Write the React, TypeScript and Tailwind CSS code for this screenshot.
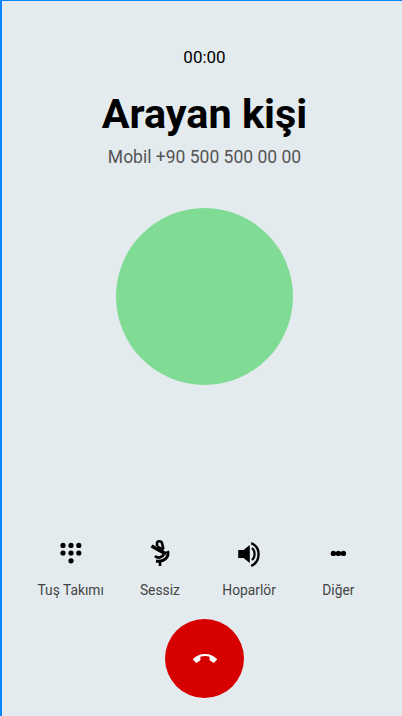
import { MdCallEnd } from 'react-icons/md'

function DialpadIcon() {
  return (
    <svg viewBox="0 0 28 28" className="h-7 w-7 fill-black">
      <circle cx="6" cy="5.4" r="2.6" />
      <circle cx="14" cy="5.4" r="2.6" />
      <circle cx="21.8" cy="5.4" r="2.6" />
      <circle cx="6" cy="13" r="2.6" />
      <circle cx="14" cy="13" r="2.6" />
      <circle cx="21.8" cy="13" r="2.6" />
      <circle cx="14" cy="20.8" r="2.6" />
    </svg>
  )
}

function MicOffIcon() {
  return (
    <svg viewBox="0 0 28 28" className="h-7 w-7 fill-none stroke-black">
      <path d="M11 6V3.2C11 1 15.2 .4 16 3.2L17.4 9" strokeWidth="2.6" />
      <path d="M5.5 6L20 13.8" strokeWidth="3.6" />
      <path d="M10.5 7.5L17 11" strokeWidth="5" />
      <path d="M21.6 11C23.4 17 18 22.4 10 21" strokeWidth="3" />
      <path d="M9 16C12 18.8 16.5 17.6 17.6 14.6" strokeWidth="2.8" />
      <path d="M14 21V26" strokeWidth="2.6" />
    </svg>
  )
}

function SpeakerIcon() {
  return (
    <svg viewBox="0 0 28 28" className="h-7 w-7">
      <path d="M3.2 10H8.5L14.8 5V23L8.5 18H3.2Z" className="fill-black" />
      <path d="M17 8C20.5 11 20.5 17 17 20" className="fill-none stroke-black" strokeWidth="2.2" />
      <path d="M16.2 3.2C26 7 26 21 16.2 26" className="fill-none stroke-black" strokeWidth="2.4" />
    </svg>
  )
}

function MoreIcon() {
  return (
    <svg viewBox="0 0 28 28" className="h-7 w-7 fill-black">
      <circle cx="9.4" cy="13.4" r="2.7" />
      <circle cx="14.4" cy="13.4" r="2.7" />
      <circle cx="19.4" cy="13.4" r="2.7" />
    </svg>
  )
}

const actions = [
  { label: 'Tuş Takımı', icon: DialpadIcon },
  { label: 'Sessiz', icon: MicOffIcon },
  { label: 'Hoparlör', icon: SpeakerIcon },
  { label: 'Diğer', icon: MoreIcon },
]

export default function App() {
  return (
    <div className="flex h-[716px] w-[402px] flex-col items-center overflow-hidden border-t border-l-2 border-[#0a84ff] bg-[#e4ebef] pl-[5px] font-['Roboto',sans-serif]">
      <p className="mt-[46px] text-[17px] leading-5 text-black">00:00</p>
      <h1 className="mt-[24px] text-[41.4px] leading-[46px] font-bold text-black">Arayan kişi</h1>
      <p className="mt-[10px] text-[17.5px] leading-5 text-[#555]">Mobil +90 500 500 00 00</p>

      <div className="mt-[41px] h-[177px] w-[177px] rounded-full bg-[#80dc94]" />

      <div className="mt-[155px] grid w-[357px] grid-cols-4">
        {actions.map(({ label, icon: Icon }) => (
          <div key={label} className="flex flex-col items-center">
            <Icon />
            <span className="mt-[14px] text-[13.8px] leading-4 text-[#444]">{label}</span>
          </div>
        ))}
      </div>

      <button type="button" className="mt-[21px] flex h-[79px] w-[79px] items-center justify-center rounded-full bg-[#d60000]">
        <MdCallEnd className="h-6 w-6 text-white" />
      </button>
    </div>
  )
}
